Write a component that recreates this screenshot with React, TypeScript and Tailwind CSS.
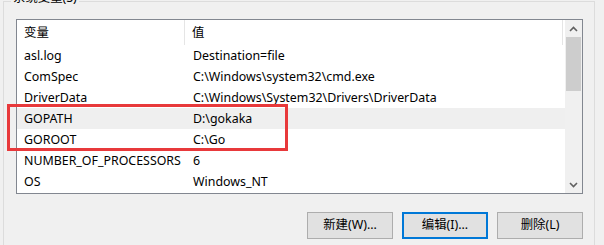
import React from "react";

const rows: [string, string][] = [
  ["asl.log", "Destination=file"],
  ["ComSpec", "C:\\Windows\\system32\\cmd.exe"],
  ["DriverData", "C:\\Windows\\System32\\Drivers\\DriverData"],
  ["GOPATH", "D:\\gokaka"],
  ["GOROOT", "C:\\Go"],
  ["NUMBER_OF_PROCESSORS", "6"],
  ["OS", "Windows_NT"],
];

export default function App() {
  return (
    <div
      className="relative w-[604px] h-[245px] overflow-hidden bg-[#f0f0f0] text-[12.4px] text-black"
      style={{ fontFamily: '"Noto Sans", "Noto Sans CJK SC", sans-serif' }}
    >
      <div className="relative mt-[1px] ml-[3px] w-[592px] h-[250px] border-t border-l border-r border-[#dcdcdc]">
        <span className="absolute left-[7px] top-[-12px] px-[2px] bg-[#f0f0f0] leading-[16px]">
          系统变量(S)
        </span>
        <div className="ml-[12px] mt-[17px] w-[567px] h-[175px] border border-[#828790] bg-white flex">
          <div className="w-[548px] flex flex-col">
            <div className="flex h-[25px] items-center">
              <div className="w-[168px] h-full pl-[7px] pt-[1px] flex items-center border-r border-[#e5e5e5]">变量</div>
              <div className="w-[378px] h-full pl-[7px] pt-[1px] flex items-center border-r border-[#e5e5e5]">值</div>
            </div>
            {rows.map(([k, v], i) => (
              <div
                key={k}
                className={
                  "flex h-[21px] pt-[1px] items-center " + (i === 3 ? "bg-[#efefef]" : "")
                }
              >
                <div className="w-[169px] pl-[7px] whitespace-nowrap">{k}</div>
                <div className="pl-[7px] whitespace-nowrap">{v}</div>
              </div>
            ))}
          </div>
          <div className="w-[17px] bg-[#f0f0f0] flex flex-col">
            <div className="h-[17px] flex items-center justify-center">
              <svg width="9" height="6" viewBox="0 0 9 6">
                <path d="M1 5 L4.5 1.5 L8 5" stroke="#606060" strokeWidth="1.6" fill="none" />
              </svg>
            </div>
            <div className="mx-[1px] h-[54px] bg-[#cdcdcd]" />
            <div className="flex-1" />
            <div className="h-[17px] flex items-center justify-center">
              <svg width="9" height="6" viewBox="0 0 9 6">
                <path d="M1 1 L4.5 4.5 L8 1" stroke="#606060" strokeWidth="1.6" fill="none" />
              </svg>
            </div>
          </div>
        </div>
        <div className="ml-[303px] mt-[18px] flex gap-[9px]">
          <button className="w-[86px] h-[27px] bg-[#e1e1e1] border border-[#adadad] flex items-center justify-center">
            新建(W)...
          </button>
          <button className="w-[86px] h-[27px] bg-[#e1e1e1] border-2 border-[#0078d7] flex items-center justify-center">
            编辑(I)...
          </button>
          <button className="w-[86px] h-[27px] bg-[#e1e1e1] border border-[#adadad] flex items-center justify-center">
            删除(L)
          </button>
        </div>
      </div>
      <div className="absolute left-[7px] top-[104px] w-[281px] h-[47px] border-[3px] border-[#e8393b]" />
    </div>
  );
}
